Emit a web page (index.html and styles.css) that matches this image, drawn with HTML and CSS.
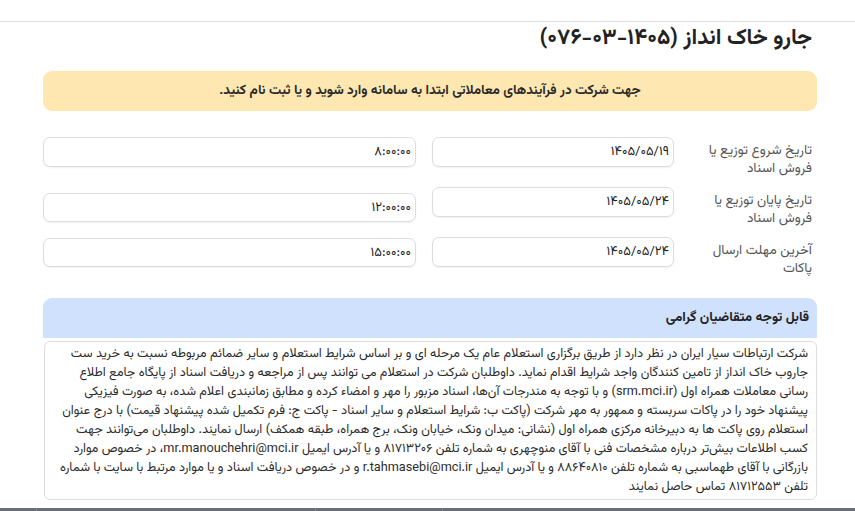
FILE: index.html
```html
<!DOCTYPE html>
<html lang="fa" dir="rtl">
<head>
<meta charset="utf-8">
<title>جارو خاک انداز</title>
<link rel="stylesheet" href="styles.css">
</head>
<body>
<div class="topbar"></div>
<main class="page">
  <h1 class="title">جارو خاک انداز (۱۴۰۵-۰۳-۰۷۶)</h1>
  <div class="alert">جهت شرکت در فرآیندهای معاملاتی ابتدا به سامانه وارد شوید و یا ثبت نام کنید.</div>

  <div class="form">
    <div class="col-right">
      <div class="row">
        <label class="lbl">تاریخ شروع توزیع یا<br>فروش اسناد</label>
        <div class="field">۱۴۰۵/۰۵/۱۹</div>
      </div>
      <div class="row">
        <label class="lbl">تاریخ پایان توزیع یا<br>فروش اسناد</label>
        <div class="field">۱۴۰۵/۰۵/۲۴</div>
      </div>
      <div class="row">
        <label class="lbl">آخرین مهلت ارسال<br>پاکات</label>
        <div class="field">۱۴۰۵/۰۵/۲۴</div>
      </div>
    </div>
    <div class="col-left">
      <div class="field f1">۸:۰۰:۰۰</div>
      <div class="field f2">۱۲:۰۰:۰۰</div>
      <div class="field f3">۱۵:۰۰:۰۰</div>
    </div>
  </div>

  <section class="notice">
    <div class="notice-head">قابل توجه متقاضیان گرامی</div>
    <div class="notice-body">
      <span class="ln">شرکت ارتباطات سیار ایران در نظر دارد از طریق برگزاری استعلام عام یک مرحله ای و بر اساس شرایط استعلام و سایر ضمائم مربوطه نسبت به خرید ست</span>
      <span class="ln">جاروب خاک انداز از تامین کنندگان واجد شرایط اقدام نماید. داوطلبان شرکت در استعلام می توانند پس از مراجعه و دریافت اسناد از پایگاه جامع اطلاع</span>
      <span class="ln">رسانی معاملات همراه اول (srm.mci.ir) و با توجه به مندرجات آن‌ها، اسناد مزبور را مهر و امضاء کرده و مطابق زمانبندی اعلام شده، به صورت فیزیکی</span>
      <span class="ln">پیشنهاد خود را در پاکات سربسته و ممهور به مهر شرکت (پاکت ب: شرایط استعلام و سایر اسناد - پاکت ج: فرم تکمیل شده پیشنهاد قیمت) با درج عنوان</span>
      <span class="ln">استعلام روی پاکت ها به دبیرخانه مرکزی همراه اول (نشانی: میدان ونک، خیابان ونک، برج همراه، طبقه همکف) ارسال نمایند. داوطلبان می‌توانند جهت</span>
      <span class="ln">کسب اطلاعات بیش‌تر درباره مشخصات فنی با آقای منوچهری به شماره تلفن ۸۱۷۱۳۲۰۶ و یا آدرس ایمیل mr.manouchehri@mci.ir، در خصوص موارد</span>
      <span class="ln">بازرگانی با آقای طهماسبی به شماره تلفن ۸۸۶۴۰۸۱۰ و یا آدرس ایمیل r.tahmasebi@mci.ir و در خصوص دریافت اسناد و یا موارد مرتبط با سایت با شماره</span>
      <span class="ln">تلفن ۸۱۷۱۲۵۵۳ تماس حاصل نمایند</span>
    </div>
  </section>

  <div class="tablehead">
    <div class="th th1"></div>
    <div class="th th2"></div>
    <div class="th th3"></div>
    <div class="th th4"></div>
  </div>
</main>
</body>
</html>
```
FILE: styles.css
```css
html, body {
  margin: 0;
  padding: 0;
  background: #ffffff;
}
body {
  direction: rtl;
  font-family: "Vazirmatn", "Vazir", "Noto Sans Arabic", "DejaVu Sans", sans-serif;
  color: #212529;
}
.topbar {
  height: 21px;
  border-bottom: 1px solid #dedede;
}
.page {
  padding: 0 38px 0 0;
}
.title {
  margin: 0 0 0 43px;
  padding: 1px 5px 0 0;
  height: 47px;
  font-size: 22px;
  font-weight: bold;
  line-height: 32px;
  color: #222;
  box-sizing: border-box;
}
.alert {
  margin: 2px 0 0 43px;
  height: 40px;
  line-height: 40px;
  background: #fee7b1;
  border-radius: 9px;
  text-align: center;
  font-size: 13.5px;
  font-weight: bold;
  color: #2a2a2a;
}
.form {
  display: flex;
  margin: 26px 0 0 43px;
  height: 161px;
}
.col-right {
  width: 385px;
  flex: none;
  display: flex;
  flex-direction: column;
}
.row {
  display: flex;
  height: 50px;
}
.lbl {
  width: 143px;
  flex: none;
  padding: 5px 5px 0 0;
  box-sizing: border-box;
  font-size: 13.5px;
  line-height: 18px;
  color: #555;
}
.field {
  height: 30px;
  box-sizing: border-box;
  border: 1px solid #dcdcdc;
  border-radius: 7px;
  box-shadow: 0 1px 2px rgba(0,0,0,0.06);
  padding: 0 4px;
  line-height: 28px;
  font-size: 13px;
  color: #222;
  background: #fff;
  text-align: right;
}
.col-right .field {
  width: 242px;
}
.col-left {
  flex: 1;
  margin-right: 16px;
  display: flex;
  flex-direction: column;
}
.col-left .field {
  width: 100%;
}
.f2 { margin-top: 26px; height: 29px; }
.f3 { margin-top: 16px; height: 29px; }

.notice {
  margin: 0 0 0 43px;
}
.notice-head {
  height: 40px;
  line-height: 40px;
  background: #cfe1fd;
  border-radius: 9px 9px 0 0;
  padding-right: 8px;
  font-size: 13.5px;
  font-weight: bold;
  color: #222;
}
.notice-body {
  margin-top: 3px;
  margin-left: 1px;
  height: 159px;
  box-sizing: border-box;
  border: 1px solid #dddddd;
  border-radius: 6px;
  padding: 3px 8px 0 0;
  font-size: 12.7px;
  line-height: 19px;
  color: #2b2b2b;
  overflow: hidden;
}
.ln {
  display: block;
  white-space: nowrap;
}
.tablehead {
  display: flex;
  margin: 8px -38px 0 0;
  height: 30px;
  background: #676e78;
}
.th {
  height: 100%;
  border-left: 1px solid #80868f;
}
.th1 { width: 412px; }
.th2 { width: 126px; }
.th3 { width: 278px; }
.th4 { flex: 1; border-left: none; }
```
